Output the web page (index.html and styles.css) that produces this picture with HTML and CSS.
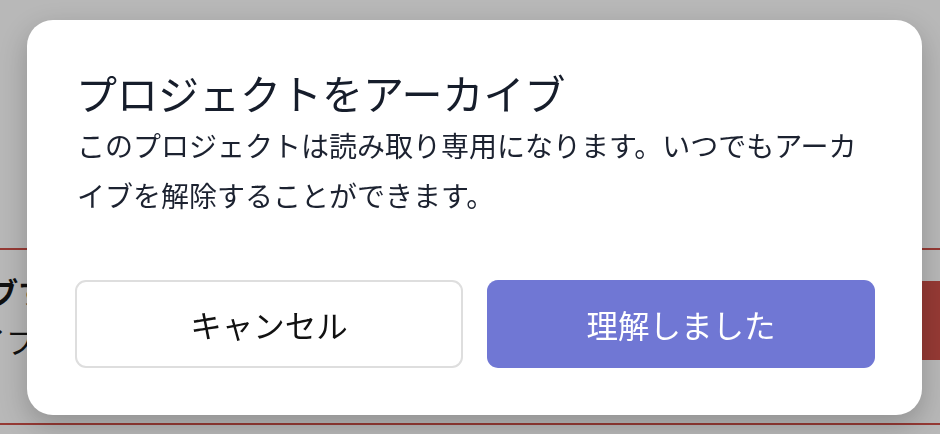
FILE: index.html
```html
<!DOCTYPE html>
<html lang="ja">
<head>
<meta charset="utf-8">
<link rel="stylesheet" href="styles.css">
</head>
<body>
<div class="page">
  <div class="section">
    <div class="row">
      <div class="row-text">
        <div class="row-title">アーカイブする</div>
        <div class="row-desc">アーカイブ</div>
      </div>
      <div class="danger-btn"></div>
    </div>
  </div>
  <div class="section-end"></div>
</div>
<div class="overlay">
  <div class="modal">
    <h2 class="modal-title">プロジェクトをアーカイブ</h2>
    <p class="modal-body">このプロジェクトは読み取り専用になります。いつでもアーカイブを解除することができます。</p>
    <div class="modal-actions">
      <button class="btn btn-cancel">キャンセル</button>
      <button class="btn btn-primary">理解しました</button>
    </div>
  </div>
</div>
</body>
</html>
```
FILE: styles.css
```css
* { box-sizing: border-box; }
html, body { margin: 0; padding: 0; }
body {
  width: 940px;
  height: 434px;
  overflow: hidden;
  background: #b8b8b8;
  font-family: "Noto Sans CJK JP", "Noto Sans", sans-serif;
}
.page {
  padding-top: 248px;
}
.section {
  border-top: 2px solid #963a35;
  height: 175px;
  overflow: hidden;
}
.row {
  display: flex;
  align-items: flex-start;
  justify-content: space-between;
  padding-top: 24px;
}
.row-text {
  color: #111;
  white-space: nowrap;
}
.row-title {
  font-size: 30px;
  font-weight: 700;
  line-height: 34px;
  margin-left: -130px;
}
.row-desc {
  font-size: 30px;
  line-height: 48px;
  margin-top: 8px;
  margin-left: -112px;
}
.danger-btn {
  background: #963a35;
  width: 120px;
  height: 79px;
  margin-top: 7px;
  margin-right: -100px;
}
.section-end {
  border-top: 2px solid #963a35;
}
.overlay {
  position: fixed;
  inset: 0;
}
.modal {
  position: absolute;
  left: 27px;
  top: 20px;
  width: 895px;
  height: 395px;
  background: #fff;
  border-radius: 26px;
  padding: 44px 47px 47px 48px;
  box-shadow: 0 10px 28px rgba(0,0,0,0.22);
  display: flex;
  flex-direction: column;
}
.modal-title {
  margin: 0;
  font-size: 41px;
  font-weight: 400;
  line-height: 56px;
  color: #161d2b;
  padding-left: 1px;
}
.modal-body {
  margin: 0;
  font-size: 28px;
  line-height: 50px;
  color: #1c2230;
  padding-left: 2px;
}
.modal-actions {
  margin-top: auto;
  display: grid;
  grid-template-columns: 1fr 1fr;
  gap: 24px;
}
.btn {
  height: 88px;
  border-radius: 11px;
  font-family: "Noto Sans CJK JP", "Noto Sans", sans-serif;
  font-size: 31.5px;
  display: flex;
  align-items: center;
  justify-content: center;
  cursor: pointer;
  padding: 0;
}
.btn-cancel {
  background: #fff;
  border: 2px solid #dedede;
  color: #111;
}
.btn-primary {
  background: #7077d4;
  border: none;
  color: #fff;
}
```
